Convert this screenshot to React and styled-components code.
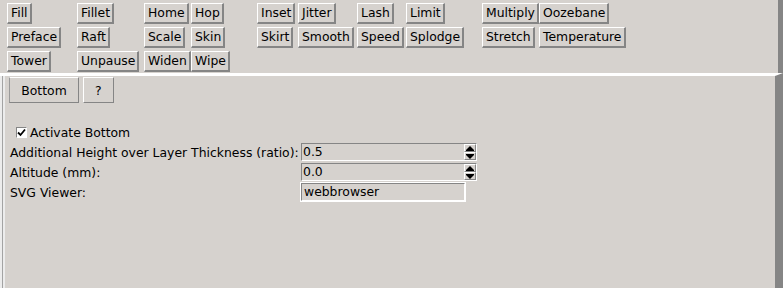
import React from 'react';
import styled, { createGlobalStyle } from 'styled-components';

const Global = createGlobalStyle`
    body {
        margin: 0;
        background: #d6d2ce;
    }
`

const Page = styled.div`
    width: 783px;
    height: 288px;
    display: flex;
    flex-direction: column;
    background: #d6d2ce;
    font-family: "DejaVu Sans", sans-serif;
    font-size: 12.4px;
    color: #000;
    overflow: hidden;
`

const Toolbar = styled.div`
    display: grid;
    grid-template-columns: 70px 67px 47px 66px 41px 59px 49px 76px 57px 1fr;
    grid-auto-rows: 21px;
    row-gap: 3px;
    justify-items: start;
    padding: 3px 0 1px 7px;
    border-right: 5px solid #858585;
`

const ToolButton = styled.button`
    height: 21px;
    padding: 0 2px 0 3px;
    border-style: solid;
    border-width: 1px 2px 2px 1px;
    border-color: #fff #858585 #858585 #fff;
    background: #d6d2ce;
    font: inherit;
    color: inherit;
    line-height: 16px;
    white-space: nowrap;
`

const Panel = styled.div`
    flex: 1;
    padding: 1px 0 0 9px;
    border-top: 3px solid #fff;
    border-right: 8px solid #858585;
    box-shadow: inset 2px 0 #ececec, inset 3px 0 #a3a3a3, inset 5px 0 #ececec;
`

const Tabs = styled.div`
    display: flex;
    gap: 4px;
`

const Tab = styled.button`
    height: 26px;
    min-width: ${p => p.$wide ? '70px' : '30px'};
    padding: 0 11px;
    border: 1px solid;
    border-color: #fff #858585 #858585 ${p => p.$wide ? '#9a9a9a' : '#fff'};
    background: #d6d2ce;
    font: inherit;
    color: inherit;
`

const Form = styled.div`
    display: grid;
    grid-template-columns: 291px auto;
    grid-auto-rows: 20px;
    align-items: center;
    margin-top: 19px;
    padding-left: 1px;
`

const CheckRow = styled.label`
    grid-column: 1 / -1;
    display: flex;
    align-items: center;
    gap: 3px;
    padding-left: 6px;
`

const Box = styled.span`
    width: 11px;
    height: 11px;
    box-sizing: border-box;
    border-style: solid;
    border-width: 1px;
    border-color: #858585 #fff #fff #858585;
    background: #fff;
    display: flex;
    align-items: center;
    justify-content: center;
`

const Label = styled.span`
    white-space: nowrap;
`

const Spin = styled.div`
    width: 176px;
    height: 18px;
    box-sizing: border-box;
    display: flex;
    border-style: solid;
    border-width: 1px;
    border-color: #858585 #fff #fff #858585;
`

const Value = styled.span`
    flex: 1;
    padding-left: 1px;
    line-height: 16px;
`

const Arrows = styled.div`
    width: 12px;
    display: flex;
    flex-direction: column;
`

const Arrow = styled.span`
    flex: 1;
    box-sizing: border-box;
    border-style: solid;
    border-width: 1px;
    border-color: #fff #858585 #858585 #fff;
    display: flex;
    align-items: center;
    justify-content: center;
`

const Entry = styled.div`
    width: 164px;
    height: 18px;
    box-sizing: border-box;
    padding-left: 2px;
    line-height: 16px;
    border-style: solid;
    border-width: 1px;
    border-color: #858585 #fff #fff #858585;
    outline: 1px solid #fff;
`

const rows = [
    ['Fill', 'Fillet', 'Home', 'Hop', 'Inset', 'Jitter', 'Lash', 'Limit', 'Multiply', 'Oozebane'],
    ['Preface', 'Raft', 'Scale', 'Skin', 'Skirt', 'Smooth', 'Speed', 'Splodge', 'Stretch', 'Temperature'],
    ['Tower', 'Unpause', 'Widen', 'Wipe'],
]

const Triangle = ({ up }) => (
    <svg width="8" height="5" viewBox="0 0 8 5">
        <polygon points={up ? '4,0 8,4 0,4' : '0,1 8,1 4,5'} fill="#000" />
        <rect x="0" y={up ? 4 : 0} width="8" height="1" fill="#000" />
    </svg>
)

const SpinBox = ({ value }) => (
    <Spin>
        <Value>{value}</Value>
        <Arrows>
            <Arrow><Triangle up /></Arrow>
            <Arrow><Triangle /></Arrow>
        </Arrows>
    </Spin>
)

const App = () => {
    return (
        <Page>
            <Global />
            <Toolbar>
                {rows.map(row => row.map(name => (
                    <ToolButton key={name}>{name}</ToolButton>
                )))}
            </Toolbar>
            <Panel>
                <Tabs>
                    <Tab $wide>Bottom</Tab>
                    <Tab>?</Tab>
                </Tabs>
                <Form>
                    <CheckRow>
                        <Box>
                            <svg width="9" height="9" viewBox="0 0 9 9">
                                <path d="M1 4.5 L3.5 7 L8 1.5" stroke="#000" strokeWidth="1.8" fill="none" />
                            </svg>
                        </Box>
                        Activate Bottom
                    </CheckRow>
                    <Label>Additional Height over Layer Thickness (ratio):</Label>
                    <SpinBox value="0.5" />
                    <Label>Altitude (mm):</Label>
                    <SpinBox value="0.0" />
                    <Label>SVG Viewer:</Label>
                    <Entry>webbrowser</Entry>
                </Form>
            </Panel>
        </Page>
    )
}

export default App;
